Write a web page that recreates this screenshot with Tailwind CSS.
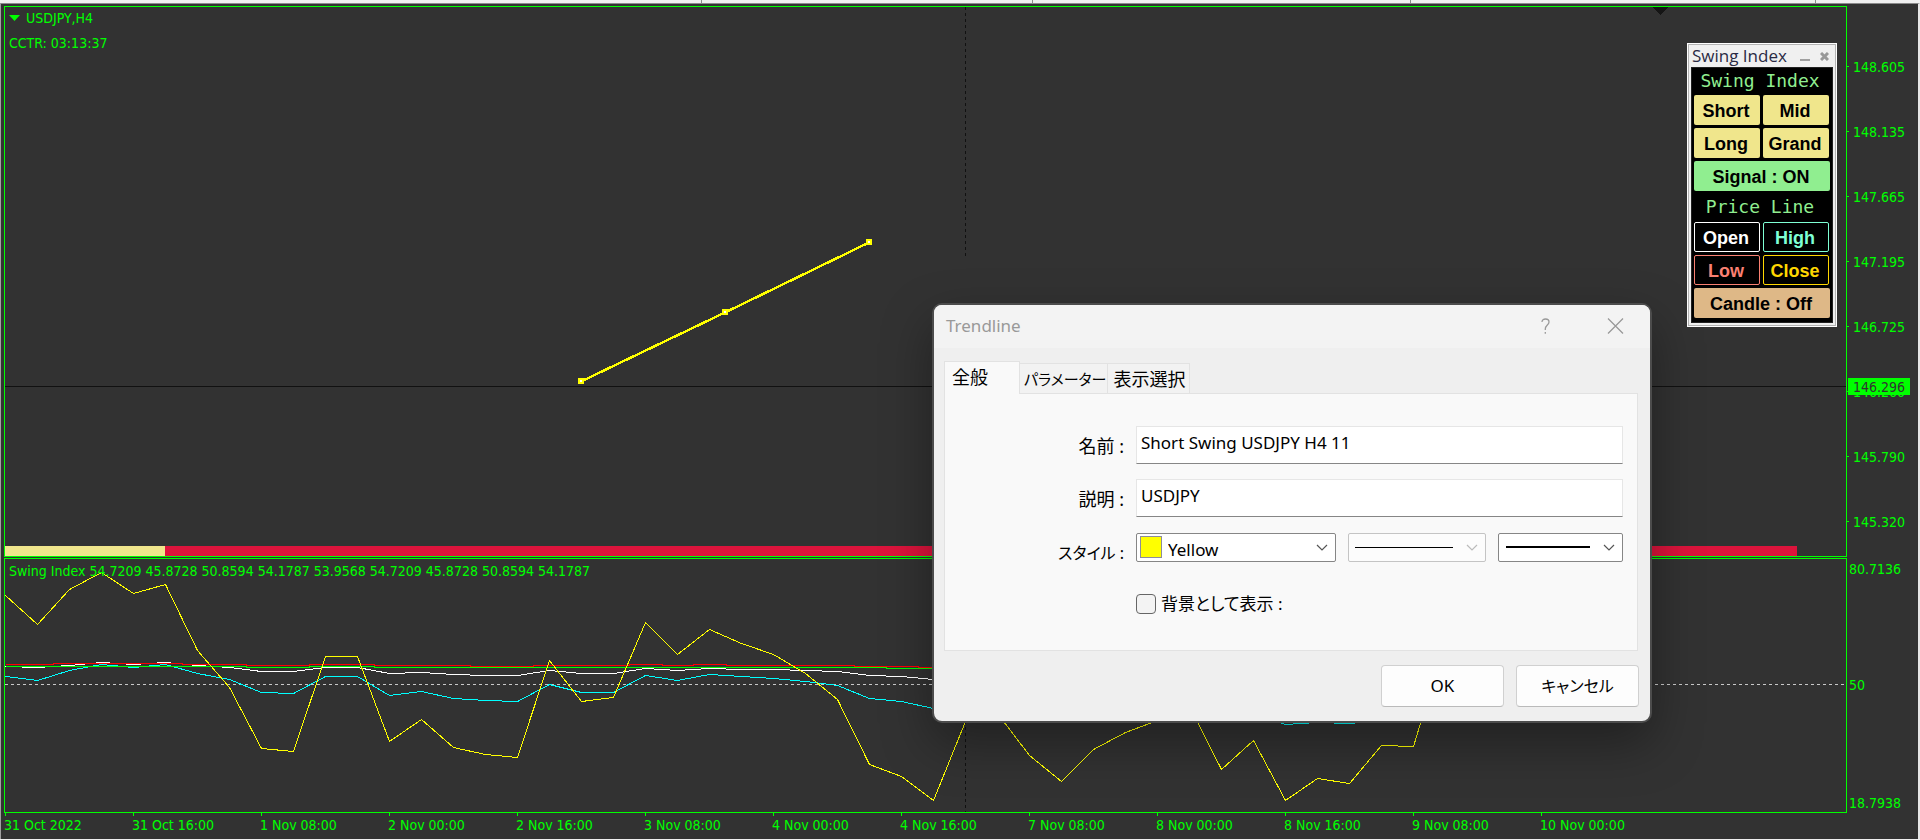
<!DOCTYPE html>
<html lang="ja">
<head>
<meta charset="utf-8">
<title>USDJPY,H4</title>
<script src="https://cdn.jsdelivr.net/npm/@tailwindcss/browser@4"></script>
</head>
<body class="flex h-screen flex-col overflow-hidden bg-[#f0f0f0] font-['DejaVu_Sans_Condensed','Noto_Sans_CJK_JP',sans-serif] text-[14px] leading-[18px] text-[#00ff00]">

<!-- toolbar edge -->
<div class="flex h-[3px] shrink-0">
  <div class="w-[702px] border-r border-[#8a8a8a]"></div>
  <div class="w-[331px] border-r border-[#8a8a8a]"></div>
  <div class="w-[378px] border-r border-[#8a8a8a]"></div>
  <div class="w-[405px] border-r border-[#8a8a8a]"></div>
</div>

<main class="relative mb-px grid min-h-0 flex-1 grid-cols-[minmax(0,1fr)_71px] grid-rows-[551fr_256fr_26px] border-t border-r-2 border-l border-t-[#8a8a8a] border-r-[#e6e6e6] border-l-[#a0a0a0] bg-[#323232] pt-[2px] pl-[3px]">

  <!-- price pane -->
  <section class="relative overflow-hidden border border-[#00ff00]">
    <svg class="absolute inset-0 h-full w-full" shape-rendering="crispEdges" fill="none">
      <path d="M960.5 0V249" stroke="#111" stroke-dasharray="3 3"/>
      <line x1="0" x2="100%" y1="379.5" y2="379.5" stroke="#111"/>
      <path d="M1647 0H1663L1655 8Z" fill="#151515"/>
      <path d="M576 374.500L720 305.500L864 235.500" stroke="#ff0" stroke-width="2.400"/>
      <g fill="#fff" stroke="#ff0" stroke-width="2">
        <rect x="574" y="372" width="4" height="4"/><rect x="718" y="303" width="4" height="4"/><rect x="862" y="233" width="4" height="4"/>
      </g>
    </svg>
    <div class="relative flex flex-col gap-[7px] pt-[2px] pl-1">
      <h1 class="flex items-center gap-[5px]"><svg width="12" height="6" fill="#00ff00"><path d="M0 0H11L5.500 6Z"/></svg>USDJPY,H4</h1>
      <p>CCTR: 03:13:37</p>
    </div>
    <div class="absolute inset-x-0 bottom-0 flex h-[10px] pr-[49px]"><div class="w-[160px] bg-[#f0e68c]"></div><div class="flex-1 bg-[#dc143c]"></div></div>
  </section>

  <!-- price scale -->
  <div class="relative flex flex-col pt-7">
    <div class="flex h-[65px] items-center gap-1"><i class="h-px w-[2px] bg-[#00ff00]"></i>148.605</div>
    <div class="flex h-[65px] items-center gap-1"><i class="h-px w-[2px] bg-[#00ff00]"></i>148.135</div>
    <div class="flex h-[65px] items-center gap-1"><i class="h-px w-[2px] bg-[#00ff00]"></i>147.665</div>
    <div class="flex h-[65px] items-center gap-1"><i class="h-px w-[2px] bg-[#00ff00]"></i>147.195</div>
    <div class="flex h-[65px] items-center gap-1"><i class="h-px w-[2px] bg-[#00ff00]"></i>146.725</div>
    <div class="flex h-[65px] items-center gap-1"><i class="h-px w-[2px] bg-[#00ff00]"></i>146.260</div>
    <div class="flex h-[65px] items-center gap-1"><i class="h-px w-[2px] bg-[#00ff00]"></i>145.790</div>
    <div class="flex h-[65px] items-center gap-1"><i class="h-px w-[2px] bg-[#00ff00]"></i>145.320</div>
    <div class="absolute top-[372px] left-px h-[17px] w-[62px] bg-[#00ff00] pl-[5px] leading-[18px] text-[#323232]">146.296</div>
  </div>

  <!-- indicator pane -->
  <section class="relative mt-px overflow-hidden border border-[#00ff00]">
    <svg class="absolute inset-0 h-full w-full" fill="none" shape-rendering="crispEdges">
      <line x1="0" x2="100%" y1="125.500" y2="125.500" stroke="#c8c8c8" stroke-dasharray="3 3"/>
      <path d="M960.500 0V253" stroke="#111" stroke-dasharray="3 3"/>
      <g transform="translate(-4.5 -558.5)">
        <polyline stroke="#fff" points="5,666 37,667 69,665 101,662 133,664 165,662 197,665 229,667 261,671 293,671 325,667 357,667 389,673 421,672 453,674 485,675 517,675 549,670 581,673 613,673 645,668 677,670 709,668 741,669 773,669 805,670 837,671 869,675 901,676 933,679"/>
        <polyline stroke="#0ff" points="5,676 37,680 69,670 101,664 133,667 165,664 197,673 229,679 261,692 293,693 325,676 357,676 389,695 421,691 453,698 485,700 517,701 549,684 581,692 613,692 645,675 677,680 709,674 741,676 773,678 805,681 837,685 869,698 901,701 933,708 1253,714 1285,724 1317,722 1349,723 1381,720"/>
        <path stroke="#f00" d="M5 664H53V663H182V664H246V665H309V664H374V665H470V666H533V665H629V664H662V665H693V664H726V665H854V666H918V667H940"/>
        <path stroke="#0f0" d="M5 666H246V667H309V666H374V667H886V668H940"/>
        <polyline stroke="#ff0" points="5,595 37,624 69,589 101,572 133,593 165,584 197,650 229,687 261,748 293,751 325,656 357,656 389,741 421,719 453,747 485,754 517,757 549,660 581,701 613,697 645,622 677,654 709,629 741,643 773,654 805,673 837,699 869,764 901,776 933,800 965,721 997,713 1029,755 1061,781 1093,749 1125,732 1157,720 1189,706 1221,769 1253,740 1285,800 1317,778 1349,783 1381,745 1413,746 1445,640"/>
      </g>
    </svg>
    <p class="relative pt-[3px] pl-1">Swing Index 54.7209 45.8728 50.8594 54.1787 53.9568 54.7209 45.8728 50.8594 54.1787</p>
  </section>
  <div class="flex flex-col justify-between pt-[3px] pb-px pl-[2px]"><span>80.7136</span><span class="pb-[2px]">50</span><span>18.7938</span></div>

  <!-- time scale -->
  <div class="col-span-2 flex overflow-hidden pl-px whitespace-nowrap">
    <div class="w-[128px] shrink-0"><i class="block h-[3px] w-px bg-[#00ff00]"></i><span class="-ml-px">31 Oct 2022</span></div>
    <div class="w-[128px] shrink-0"><i class="block h-[3px] w-px bg-[#00ff00]"></i><span class="-ml-px">31 Oct 16:00</span></div>
    <div class="w-[128px] shrink-0"><i class="block h-[3px] w-px bg-[#00ff00]"></i><span class="-ml-px">1 Nov 08:00</span></div>
    <div class="w-[128px] shrink-0"><i class="block h-[3px] w-px bg-[#00ff00]"></i><span class="-ml-px">2 Nov 00:00</span></div>
    <div class="w-[128px] shrink-0"><i class="block h-[3px] w-px bg-[#00ff00]"></i><span class="-ml-px">2 Nov 16:00</span></div>
    <div class="w-[128px] shrink-0"><i class="block h-[3px] w-px bg-[#00ff00]"></i><span class="-ml-px">3 Nov 08:00</span></div>
    <div class="w-[128px] shrink-0"><i class="block h-[3px] w-px bg-[#00ff00]"></i><span class="-ml-px">4 Nov 00:00</span></div>
    <div class="w-[128px] shrink-0"><i class="block h-[3px] w-px bg-[#00ff00]"></i><span class="-ml-px">4 Nov 16:00</span></div>
    <div class="w-[128px] shrink-0"><i class="block h-[3px] w-px bg-[#00ff00]"></i><span class="-ml-px">7 Nov 08:00</span></div>
    <div class="w-[128px] shrink-0"><i class="block h-[3px] w-px bg-[#00ff00]"></i><span class="-ml-px">8 Nov 00:00</span></div>
    <div class="w-[128px] shrink-0"><i class="block h-[3px] w-px bg-[#00ff00]"></i><span class="-ml-px">8 Nov 16:00</span></div>
    <div class="w-[128px] shrink-0"><i class="block h-[3px] w-px bg-[#00ff00]"></i><span class="-ml-px">9 Nov 08:00</span></div>
    <div class="w-[128px] shrink-0"><i class="block h-[3px] w-px bg-[#00ff00]"></i><span class="-ml-px">10 Nov 00:00</span></div>
  </div>

  <!-- Swing Index floating panel -->
  <aside class="absolute top-[39px] right-[81px] w-[150px] border border-white bg-[#b4b4b4] p-px">
    <div class="bg-[#f0f0f0] px-[2px] pb-[2px]">
      <header class="flex h-[22px] items-center pl-px font-['Open_Sans',sans-serif] text-[17px] text-[#2a2a44]">
        <h2 class="flex-1 whitespace-nowrap">Swing Index</h2>
        <button aria-label="最小化" class="flex h-4 w-5 items-end pb-[2px]"><svg width="10" height="3" fill="#a0a0a0"><path d="M0 0H10V2H0Z"/></svg></button>
        <button aria-label="閉じる" class="mr-1"><svg width="9" height="9" fill="none" stroke="#999" stroke-width="3"><path d="M1 1L8 8M8 1L1 8"/></svg></button>
      </header>
      <div class="flex flex-col gap-[3px] border border-[#222] bg-black px-[2px] pb-1 font-['Liberation_Sans',sans-serif] text-[18px] font-bold text-black">
        <h3 class="h-6 pr-1 text-center font-['DejaVu_Sans_Mono',monospace] leading-[26px] font-normal whitespace-nowrap text-[#90ee90]">Swing Index</h3>
        <div class="grid grid-cols-2 gap-[3px] pr-px">
          <button class="h-[30px] rounded-xs bg-[#f0e68c] pt-px pr-[2px]">Short</button>
          <button class="h-[30px] rounded-xs bg-[#f0e68c] pt-px pr-[2px]">Mid</button>
          <button class="h-[30px] rounded-xs bg-[#f0e68c] pt-px pr-[2px]">Long</button>
          <button class="h-[30px] rounded-xs bg-[#f0e68c] pt-px pr-[2px]">Grand</button>
        </div>
        <button class="h-[30px] rounded-xs bg-[#90ee90] pt-px pr-[2px]">Signal : ON</button>
        <h3 class="h-[25px] pr-1 text-center font-['DejaVu_Sans_Mono',monospace] leading-[26px] font-normal whitespace-nowrap text-[#90ee90]">Price Line</h3>
        <div class="grid grid-cols-2 gap-[3px] pr-px">
          <button class="h-[30px] rounded-xs border border-white pt-px pr-[2px] text-white">Open</button>
          <button class="h-[30px] rounded-xs border border-[#7fffd4] pt-px pr-[2px] text-[#7fffd4]">High</button>
          <button class="h-[30px] rounded-xs border border-[#fa8072] pt-px pr-[2px] text-[#fa8072]">Low</button>
          <button class="h-[30px] rounded-xs border border-[#ffd700] pt-px pr-[2px] text-[#ffd700]">Close</button>
        </div>
        <button class="h-[30px] rounded-xs bg-[#deb887] pt-px pr-[2px]">Candle : Off</button>
      </div>
    </div>
  </aside>

  <!-- Trendline properties dialog -->
  <form role="dialog" aria-labelledby="dlg-title" class="absolute top-[299px] left-[931px] w-[720px] overflow-hidden rounded-[10px] border-2 border-[#4c4c4c] bg-[#efefef] font-['Noto_Sans','Noto_Sans_CJK_JP',sans-serif] text-[17px] leading-[24px] text-black shadow-[0_20px_50px_rgba(0,0,0,0.35)]">
    <header class="flex h-[43px] items-center bg-[#f3f3f3] pr-[26px] pb-[2px] pl-3 text-[#999]">
      <h2 id="dlg-title" class="flex-1">Trendline</h2>
      <button type="button" aria-label="ヘルプ" class="mr-[57px]"><svg width="9" height="16" fill="none" stroke="#999" stroke-width="1.300"><path d="M1 4C1 2 2.500 1 4.500 1S8 2.200 8 4C8 7 4.300 7 4.300 11V12M4.300 14V15.800"/></svg></button>
      <button type="button" aria-label="閉じる"><svg width="17" height="16" fill="none" stroke="#999" stroke-width="1.300"><path d="M1 0.500L16 15.500M16 0.500L1 15.500"/></svg></button>
    </header>
    <div class="pt-[13px] pr-[11px] pb-[14px] pl-[10px]">
      <div role="tablist" class="flex items-end">
        <button type="button" role="tab" aria-selected="true" class="relative z-10 -mb-px h-[33px] w-[76px] border border-b-0 border-[#e2e2e2] bg-[#f9f9f9] pb-[2px] pl-[7px] text-left text-[18px]">全般</button>
        <button type="button" role="tab" class="h-[30px] w-[88px] border-t border-r border-[#e2e2e2] bg-[#f2f2f2] pl-1 text-left text-[15px] whitespace-nowrap [font-feature-settings:'palt']">パラメーター</button>
        <button type="button" role="tab" class="h-[30px] w-[82px] border-t border-r border-[#e2e2e2] bg-[#f2f2f2] pl-[2px] text-[18px] whitespace-nowrap">表示選択</button>
      </div>
      <div role="tabpanel" class="mr-px grid grid-cols-[179px_minmax(0,1fr)] gap-x-[12px] border border-[#e2e2e2] bg-[#f9f9f9] pt-8 pr-[14px] pb-[34px]">
        <label for="name" class="pt-2 text-right text-[18px]">名前 :</label>
        <input id="name" value="Short Swing USDJPY H4 11" class="mb-[15px] h-[38px] border border-[#e6e6e6] border-b-[#868686] bg-white px-1 pb-[6px]">
        <label for="desc" class="pt-2 text-right text-[18px]">説明 :</label>
        <input id="desc" value="USDJPY" class="mb-4 h-[38px] border border-[#e6e6e6] border-b-[#868686] bg-white px-1 pb-[6px]">
        <label for="color" class="-mb-1 pt-2 text-right text-[16px] [font-feature-settings:'palt']">スタイル :</label>
        <div class="grid grid-cols-[200fr_138fr_125fr] gap-3">
          <div class="relative">
            <select id="color" class="h-[29px] w-full appearance-none rounded-xs border border-[#868686] bg-white pt-[5px] pl-[31px] leading-[22px]"><option>Yellow</option></select>
            <i class="pointer-events-none absolute top-[3px] left-1 size-[22px] border border-[#8c8c9c] bg-[#ff0]"></i>
            <svg class="pointer-events-none absolute top-[11px] right-2" width="12" height="8" fill="none" stroke="#555" stroke-width="1.200"><path d="M1 1L6 6L11 1"/></svg>
          </div>
          <div class="relative">
            <select aria-label="線種" disabled class="h-[29px] w-full appearance-none rounded-xs border border-[#c4c4c4] bg-[#fcfcfc]"><option aria-label="実線"></option></select>
            <i class="pointer-events-none absolute top-[14px] left-[7px] h-px w-[98px] bg-black"></i>
            <svg class="pointer-events-none absolute top-[11px] right-2" width="12" height="8" fill="none" stroke="#bbb" stroke-width="1.200"><path d="M1 1L6 6L11 1"/></svg>
          </div>
          <div class="relative">
            <select aria-label="線幅" class="h-[29px] w-full appearance-none rounded-xs border border-[#868686] bg-white"><option aria-label="2"></option></select>
            <i class="pointer-events-none absolute top-[13px] left-2 h-[2px] w-[84px] bg-black"></i>
            <svg class="pointer-events-none absolute top-[11px] right-2" width="12" height="8" fill="none" stroke="#555" stroke-width="1.200"><path d="M1 1L6 6L11 1"/></svg>
          </div>
        </div>
        <div class="col-start-2 mt-[30px] flex items-center gap-[5px]">
          <input id="bg" type="checkbox" class="size-5 appearance-none rounded-[4px] border border-[#666] bg-[#f3f3f3]">
          <label for="bg" class="[font-feature-settings:'palt']">背景として表示 :</label>
        </div>
      </div>
      <div class="mt-[14px] flex justify-end gap-3">
        <button type="button" class="h-[42px] w-[123px] rounded-[4px] border border-[#d0d0d0] border-b-[#bababa] bg-[#fdfdfd]">OK</button>
        <button type="button" class="h-[42px] w-[123px] rounded-[4px] border border-[#d0d0d0] border-b-[#bababa] bg-[#fdfdfd] text-[16px] [font-feature-settings:'palt']">キャンセル</button>
      </div>
    </div>
  </form>
</main>
</body>
</html>
